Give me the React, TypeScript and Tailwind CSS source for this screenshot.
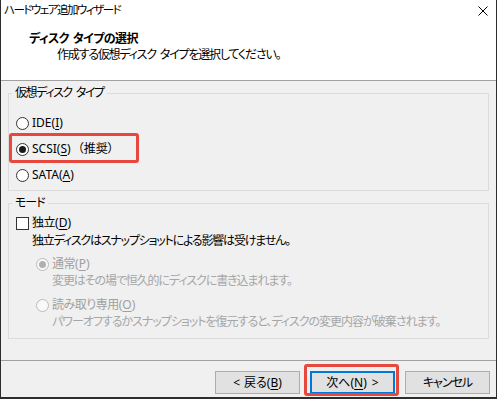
import React from 'react';

const Radio = ({ checked = false, disabled = false }: { checked?: boolean; disabled?: boolean }) => (
  <span
    className={`flex h-[13px] w-[13px] shrink-0 items-center justify-center rounded-full border ${
      disabled ? 'border-[#bcbcbc] bg-[#f9f9f9]' : 'border-[#333333] bg-white'
    }`}
  >
    {checked && <span className={`h-[7px] w-[7px] rounded-full ${disabled ? 'bg-[#b0b0b0]' : 'bg-[#1a1a1a]'}`} />}
  </span>
);

const Key = ({ k }: { k: string }) => (
  <span className="tracking-normal">
    (<span className="underline underline-offset-2">{k}</span>)
  </span>
);

// narrow text keeps its word gap
const Gap = () => <span className="inline-block w-[4px]"> </span>;

const Highlight = ({ className }: { className: string }) => (
  <span className={`pointer-events-none absolute rounded-[3px] border-[3px] border-[#e8473e] ${className}`} />
);

export default function App() {
  return (
    <div className="flex h-[399px] w-[497px] flex-col border-x border-b-2 border-[#2d2d2d] bg-[#f0f0f0] font-['Noto_Sans','Noto_Sans_CJK_JP',sans-serif] text-[12px] text-black [font-feature-settings:'palt']">
      {/* header */}
      <div className="h-[81px] shrink-0 border-b border-[#a0a0a0] bg-white">
        <div className="flex h-[20px] items-center justify-between pl-[3px] pr-[8px]">
          <span className="text-[11.5px] leading-[14px] tracking-[-1.5px]">ハードウェア追加ウィザード</span>
          <svg width="10" height="10" viewBox="0 0 10 10" className="mt-[1px]">
            <path d="M0.5 0.5 L9.5 9.5 M9.5 0.5 L0.5 9.5" stroke="#000" strokeWidth="1" />
          </svg>
        </div>
        <div className="mt-[11px] pl-[28px] font-bold leading-[16px] tracking-[-0.6px]">
          ディスク<Gap />タイプの選択
        </div>
        <div className="pl-[56px] leading-[16px] tracking-[-1.2px]">
          作成する仮想ディスク<Gap />タイプを選択してください。
        </div>
      </div>

      {/* body */}
      <div className="flex-1">
        <fieldset className="mx-[7px] mt-[5px] border border-[#dcdcdc] pb-[2px] pt-[10px]">
          <legend className="ml-[3px] px-[3px] leading-[14px] tracking-[-1.4px]">
            仮想ディスク<Gap />タイプ
          </legend>
          <div className="flex h-[26px] items-center pl-[7px]">
            <Radio />
            <span className="ml-[3px]">
              IDE<Key k="I" />
            </span>
          </div>
          <div className="relative flex h-[26px] items-center pl-[7px]">
            <Highlight className="left-0 top-[-3px] h-[30px] w-[130px]" />
            <Radio checked />
            <span className="ml-[3px]">
              SCSI<Key k="S" />
            </span>
            <span className="ml-[7px]">（推奨）</span>
          </div>
          <div className="flex h-[26px] items-center pl-[7px]">
            <Radio />
            <span className="ml-[3px]">
              SATA<Key k="A" />
            </span>
          </div>
        </fieldset>

        <fieldset className="mx-[7px] mt-[5px] border border-[#dcdcdc] pb-[8px] pt-[3px]">
          <legend className="ml-[3px] px-[3px] leading-[14px] tracking-[-1px]">モード</legend>
          <div className="flex h-[20px] items-center pl-[7px]">
            <span className="h-[13px] w-[13px] shrink-0 border border-[#333333] bg-white" />
            <span className="ml-[3px] tracking-[-0.5px]">
              独立<Key k="D" />
            </span>
          </div>
          <div className="h-[16px] pl-[23px] leading-[16px] tracking-[-1.2px]">独立ディスクはスナップショットによる影響は受けません。</div>

          <div className="mt-[6px] flex h-[18px] items-center pl-[27px] text-[#a0a0a0]">
            <Radio checked disabled />
            <span className="ml-[3px] tracking-[-0.5px]">
              通常<Key k="P" />
            </span>
          </div>
          <div className="h-[16px] pl-[43px] leading-[16px] tracking-[-1.1px] text-[#a6a6a6]">変更はその場で恒久的にディスクに書き込まれます。</div>

          <div className="mt-[7px] flex h-[18px] items-center pl-[27px] text-[#a0a0a0]">
            <Radio disabled />
            <span className="ml-[3px] tracking-[-0.5px]">
              読み取り専用<Key k="O" />
            </span>
          </div>
          <div className="h-[16px] pl-[43px] leading-[16px] tracking-[-1px] text-[#a6a6a6]">
            パワーオフするかスナップショットを復元すると、ディスクの変更内容が破棄されます。
          </div>
        </fieldset>
      </div>

      {/* footer */}
      <div className="flex h-[37px] shrink-0 justify-end gap-[10px] border-t border-[#a0a0a0] pr-[6px] pt-[10px]">
        <button className="flex h-[23px] w-[85px] items-center justify-center border border-[#adadad] bg-[#e1e1e1]">
          <span>&lt;</span>
          <span className="ml-[4px]">戻る</span>
          <Key k="B" />
        </button>
        <div className="relative">
          <Highlight className="left-[-6px] top-[-7px] h-[32px] w-[95px]" />
          <button className="flex h-[23px] w-[85px] items-center justify-center border-2 border-[#0078d7] bg-[#e1e1e1]">
            <span>次へ</span>
            <Key k="N" />
            <span className="ml-[5px]">&gt;</span>
          </button>
        </div>
        <button className="flex h-[23px] w-[85px] items-center justify-center border border-[#adadad] bg-[#e1e1e1] tracking-[-1px]">
          キャンセル
        </button>
      </div>
    </div>
  );
}
